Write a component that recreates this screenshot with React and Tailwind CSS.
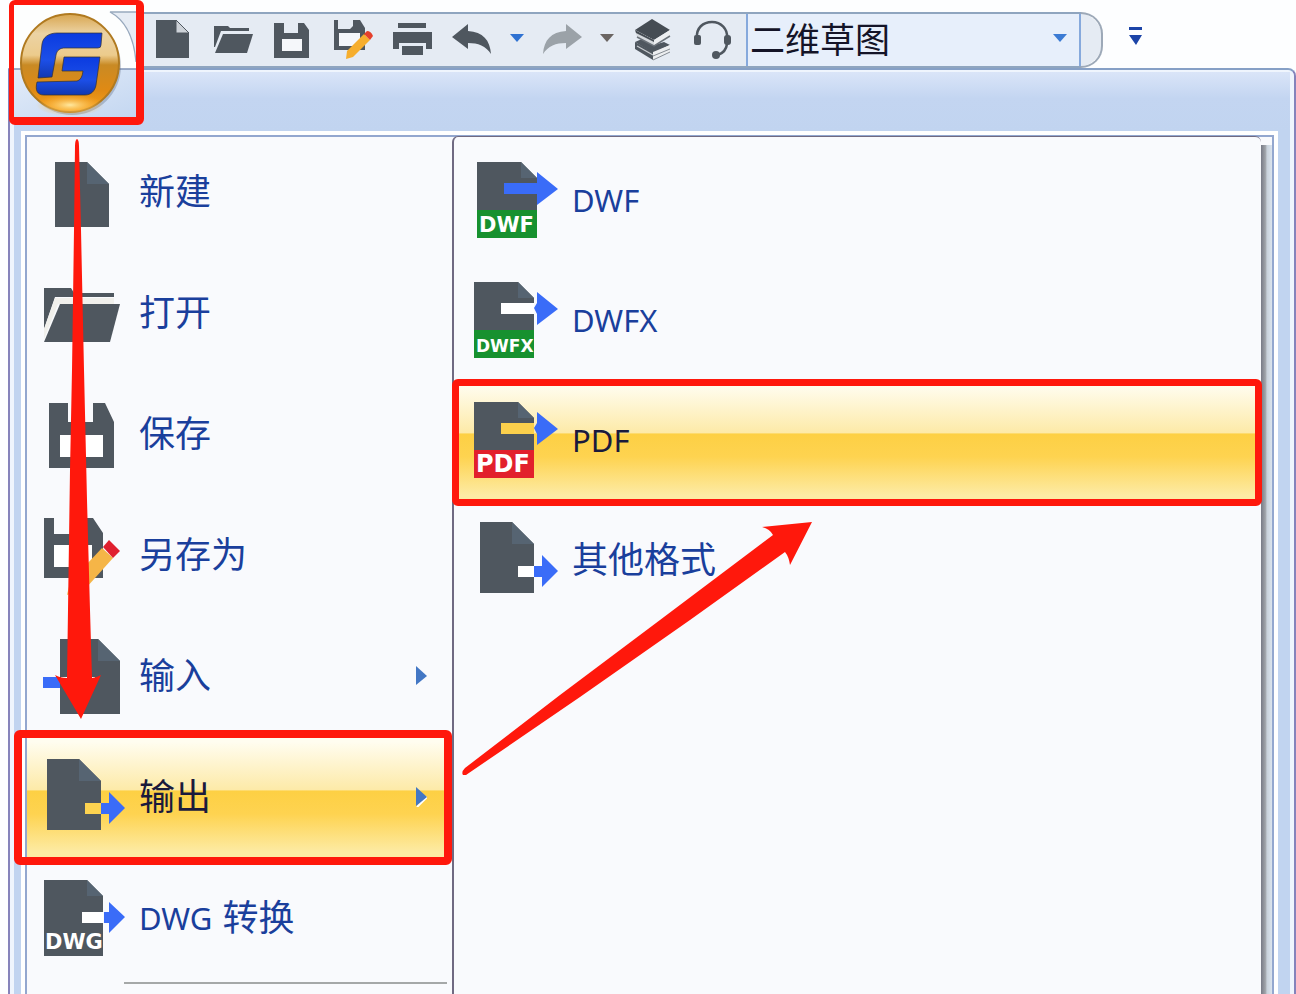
const INK = "#4f575f";
const BLUE = "#3a6cf8";

function PageShape({ x, y, w, h, fold }) {
    const right = x + w;
    return (
        <>
            <path d={`M${x} ${y}H${right - fold}L${right} ${y + fold}V${y + h}H${x}Z`} fill={INK} />
            <path d={`M${right - fold} ${y}L${right} ${y + fold}H${right - fold}Z`} fill="#566472" />
        </>
    );
}

function MenuGlyph({ children }) {
    return (
        <svg className="w-[84px] h-20 shrink-0" viewBox="0 0 84 80" aria-hidden="true">
            {children}
        </svg>
    );
}

function NewIcon() {
    return (
        <MenuGlyph>
            <PageShape x={12} y={10} w={54} h={65} fold={22} />
        </MenuGlyph>
    );
}

function OpenIcon() {
    return (
        <MenuGlyph>
            <path d="M1 15H28L31 20H71V24H12L1 56Z" fill={INK} />
            <path d="M12 25H71V31H15L1 66V56Z" fill="#f1f0ec" />
            <path d="M17 31H77L67 69H1Z" fill={INK} />
        </MenuGlyph>
    );
}

function SaveIcon() {
    return (
        <MenuGlyph>
            <path d="M6 9H25V28H50V9H62L71 28V74H6Z" fill={INK} />
            <path d="M17 41H60V63H17Z" fill="#fff" />
        </MenuGlyph>
    );
}

function SaveAsIcon() {
    return (
        <MenuGlyph>
            <path d="M1 3H11V19H36V3H50L60 18V63H1Z" fill={INK} />
            <path d="M11 30H49V52H11Z" fill="#fff" />
            <path d="M59 33L70 43L43 73L24 80L27 67Z" fill="#f5b547" />
            <path d="M66 25L77 36L70 43L60 32Z" fill="#e0202f" />
        </MenuGlyph>
    );
}

function ImportIcon() {
    return (
        <MenuGlyph>
            <PageShape x={17} y={3} w={60} h={75} fold={22} />
            <path d="M0 41H17V52H0Z" fill={BLUE} />
            <path d="M18 41H52V48H18Z" fill="#fff" />
        </MenuGlyph>
    );
}

function ExportIcon({ active, x = 0 }) {
    return (
        <MenuGlyph>
            <g transform={`translate(${x} 0)`}>
                <PageShape x={4} y={2} w={54} h={71} fold={22} />
                <path d="M42 46H58V57H42Z" fill={active ? "#fdd350" : "#fff"} />
                <path d="M58 46H66V35L82 51L66 67V57H58Z" fill={BLUE} />
            </g>
        </MenuGlyph>
    );
}

function DwgIcon() {
    return (
        <MenuGlyph>
            <PageShape x={1} y={2} w={59} h={76} fold={16} />
            <path d="M39 34H60V45H39Z" fill="#fff" />
            <path d="M61 34H66V24L82 39L66 55V45H61Z" fill={BLUE} />
            <text x="2" y="71" fontSize="21" fontWeight="700" fontFamily="DejaVu Sans" fill="#fff">
                DWG
            </text>
        </MenuGlyph>
    );
}

function FormatIcon({ tag, band, shaft, size = 21, x = 0 }) {
    return (
        <MenuGlyph>
            <PageShape x={x} y={2} w={60} h={76} fold={16} />
            <path d={`M${x} 50H${x + 60}V78H${x}Z`} fill={band} />
            <path d={`M${x + 27} 23H${x + 60}V34H${x + 27}Z`} fill={shaft} />
            <path d="M60 28L63 23V12L84 29L63 45V34Z" fill={BLUE} />
            <text x={x + 2} y="72" fontSize={size} fontWeight="700" fontFamily="DejaVu Sans" fill="#fff">
                {tag}
            </text>
        </MenuGlyph>
    );
}

function ToolButton({ label, children }) {
    return (
        <button type="button" aria-label={label} className="w-[60px] h-full flex items-center justify-center shrink-0">
            <svg className="w-11 h-11" viewBox="0 0 44 44" aria-hidden="true">
                {children}
            </svg>
        </button>
    );
}

function DropButton({ label, color }) {
    return (
        <button type="button" aria-label={label} className="w-[30px] h-full flex items-center justify-center shrink-0">
            <svg className="w-[14px] h-2 mb-1" viewBox="0 0 14 8" aria-hidden="true">
                <path d="M0 0H14L7 8Z" fill={color} />
            </svg>
        </button>
    );
}

function AppLogo() {
    return (
        <svg className="w-full h-full" viewBox="13 5 122 112" preserveAspectRatio="none" aria-hidden="true">
            <defs>
                <linearGradient id="ball" x1="0" y1="0" x2="0" y2="1">
                    <stop offset="0" stopColor="#d8a650" />
                    <stop offset="0.2" stopColor="#ecd3a4" />
                    <stop offset="0.42" stopColor="#eccb8c" />
                    <stop offset="0.52" stopColor="#c98a24" />
                    <stop offset="0.78" stopColor="#e08a14" />
                    <stop offset="1" stopColor="#f7a21c" />
                </linearGradient>
                <radialGradient id="glow" cx="0.5" cy="0.5" r="0.5">
                    <stop offset="0" stopColor="#ffe9a0" />
                    <stop offset="1" stopColor="#ffb030" stopOpacity="0" />
                </radialGradient>
                <linearGradient id="mark" x1="0" y1="0" x2="0" y2="1">
                    <stop offset="0" stopColor="#0b3be0" />
                    <stop offset="0.6" stopColor="#1c4fe8" />
                    <stop offset="1" stopColor="#1238b0" />
                </linearGradient>
                <linearGradient id="base" x1="0" y1="0" x2="1" y2="1">
                    <stop offset="0" stopColor="#e3ecf9" />
                    <stop offset="1" stopColor="#c4d7f1" />
                </linearGradient>
            </defs>
            <path d="M13 5H135V69H13Z" fill="#fdfefe" />
            <path d="M109 12H135V62C133 38 124 20 109 12Z" fill="#e6ecf4" />
            <path d="M135 12H109C124 20 133 38 135 62" fill="none" stroke="#98a9bd" strokeWidth="1.3" />
            <path d="M13 69H135V117H13Z" fill="url(#base)" />
            <path d="M13 69H135" stroke="#7f92b4" strokeWidth="1.5" />
            <circle cx="71" cy="66" r="49" fill="#5d6a80" opacity="0.35" />
            <circle cx="69" cy="63" r="49" fill="url(#ball)" stroke="#b07a20" strokeWidth="2" />
            <ellipse cx="69" cy="105" rx="34" ry="11" fill="url(#glow)" />
            <g fill="url(#mark)" stroke="#35302e" strokeWidth="0.7">
                <path d="M101 33H56C48 33 42 37 41 44L37 78L51 77L55 55C56 50 59 48 64 48H97Q100 48 100 45Z" />
                <path d="M63 57H99L95 85C94 91 90 95 84 95H43C36 95 34 90 36 82L76 81Q81 80 82 71H61Z" />
            </g>
        </svg>
    );
}

function QuickAccessBar() {
    return (
        <div className="flex-1 h-[56px] flex bg-[#e5ebf3] min-w-0 rounded-r-[28px]">
            <div className="flex-1 flex border-y-2 border-[#8fa5bf] min-w-0">
                <div className="flex -ml-0.5">
                    <ToolButton label="新建">
                        <path d="M6 2H26L39 15V40H6Z" fill={INK} />
                        <path d="M26 2L39 15H26Z" fill="#cdd2d8" stroke={INK} strokeWidth="1" />
                    </ToolButton>
                    <ToolButton label="打开">
                        <path d="M4 8H18L20 10H39V13H11L5 29H4Z" fill={INK} />
                        <path d="M13 16H43L37 35H5Z" fill={INK} />
                    </ToolButton>
                    <ToolButton label="保存">
                        <path d="M4 5H14V15H28V5H34L39 12V40H4Z" fill={INK} />
                        <path d="M12 21H32V33H12Z" fill="#f5f7fa" />
                    </ToolButton>
                    <ToolButton label="另存为">
                        <path d="M4 2H8V11H20L23 8V2H30L35 10V32H4Z" fill={INK} />
                        <path d="M9 15H30V28H9Z" fill="#f5f7fa" />
                        <path d="M34 16L40 22L23 39L16 41L17 33Z" fill="#f6ae2d" />
                        <path d="M37 13Q41 13 43 18L40 22L34 16Z" fill="#e5402c" />
                    </ToolButton>
                    <ToolButton label="打印">
                        <path d="M8 5H36V10H8ZM3 14H42V31H36V25H9V31H3Z" fill={INK} />
                        <path d="M12 28H33V37H12Z" fill={INK} />
                    </ToolButton>
                    <ToolButton label="撤销">
                        <path d="M2 19L18 6V13C33 14 40 22 41 36C36 28 28 25 18 25V31Z" fill={INK} />
                    </ToolButton>
                    <DropButton label="撤销列表" color="#2f72d2" />
                    <ToolButton label="重做">
                        <path d="M42 19L26 6V13C11 14 4 22 3 36C8 28 16 25 26 25V31Z" fill="#9ba2a8" />
                    </ToolButton>
                    <DropButton label="重做列表" color="#6b6562" />
                    <ToolButton label="图库">
                        <path d="M5 24L12 21L24 27L34 24L40 27L23 35Z" fill={INK} />
                        <path d="M5 24L23 34V42L5 31Z" fill={INK} />
                        <path d="M23 34L40 27V34L23 42Z" fill="#eceef0" />
                        <path d="M7 28L23 37" stroke="#c9cdd1" strokeWidth="1.2" />
                        <path d="M23 38L40 31M23 42L40 34" stroke="#858c93" strokeWidth="1" />
                        <path d="M22 1L40 12L24 22L5 12Z" fill="#454c53" />
                        <path d="M24 22L40 12V18L24 28Z" fill="#eceef0" />
                        <path d="M5 12L24 22V28L7 19Z" fill="#d5d9dd" />
                        <path d="M5 12L24 22V24L6 15Z" fill="#454c53" />
                        <path d="M7 19L24 28L40 18" fill="none" stroke="#6b7279" strokeWidth="1.5" />
                    </ToolButton>
                    <ToolButton label="在线客服">
                        <path d="M7 20C6 10 13 4 22 4C31 4 38 11 37 20" fill="none" stroke={INK} strokeWidth="2.5" />
                        <path d="M37 26Q36 34 28 37" fill="none" stroke={INK} strokeWidth="2.5" />
                        <rect x="4" y="17" width="7" height="10" rx="2" fill={INK} />
                        <rect x="34" y="17" width="7" height="10" rx="3" fill={INK} />
                        <circle cx="26" cy="37" r="4" fill={INK} />
                    </ToolButton>
                </div>
                <div className="relative flex-1 ml-1 border-x-2 border-[#86a9dc] bg-[#e7effb] min-w-0">
                    <select
                        aria-label="工作空间"
                        className="w-full h-[52px] appearance-none bg-transparent pl-[2px] pb-1 text-[35px] leading-[52px] text-[#141428] outline-none"
                    >
                        <option>二维草图</option>
                    </select>
                    <svg className="absolute right-3 top-5 w-[14px] h-2 pointer-events-none" viewBox="0 0 14 8" aria-hidden="true">
                        <path d="M0 0H14L7 8Z" fill="#3b7bd4" />
                    </svg>
                </div>
            </div>
            <span className="w-[22px] h-full border-t-2 border-r-2 border-b-2 border-[#9da9b8] rounded-r-full shrink-0" />
        </div>
    );
}

const mainItems = [
    { label: "新建", icon: <NewIcon /> },
    { label: "打开", icon: <OpenIcon /> },
    { label: "保存", icon: <SaveIcon /> },
    { label: "另存为", icon: <SaveAsIcon /> },
    { label: "输入", icon: <ImportIcon />, more: true },
    { label: "输出", icon: <ExportIcon active />, more: true, active: true },
    { latin: "DWG", label: "转换", icon: <DwgIcon /> },
];

const exportItems = [
    { latin: "DWF", icon: <FormatIcon tag="DWF" band="#17912f" shaft={BLUE} x={3} /> },
    { latin: "DWFX", icon: <FormatIcon tag="DWFX" band="#17912f" shaft="#fff" size={17} /> },
    { latin: "PDF", icon: <FormatIcon tag="PDF" band="#e2202c" shaft="#fcd04c" size={24} />, active: true },
    { label: "其他格式", icon: <ExportIcon x={2} /> },
];

function MenuItem({ item, pad, frame }) {
    return (
        <li className="relative">
            <button
                type="button"
                className={`w-full h-[120px] flex items-center text-left ${pad} ${item.active
                    ? "text-[#1a1a3c] bg-[linear-gradient(180deg,#fffdf0_4%,#fdeaa8_44%,#fdd044_45%,#fed350_64%,#fdeba4_96%)]"
                    : "text-[#1a3f9c]"
                    }`}
            >
                {item.icon}
                <span className="flex items-center gap-[10px] text-[36px] leading-[48px] whitespace-nowrap">
                    {item.latin ? <span className="text-[31px]">{item.latin}</span> : null}
                    {item.label ? <span>{item.label}</span> : null}
                </span>
                {item.more ? (
                    <svg className="w-[11px] h-5 ml-auto mr-[25px]" viewBox="0 0 11 20" aria-hidden="true">
                        {item.active ? <path d="M11 10L1 20" stroke="#fff" strokeWidth="2" /> : null}
                        <path d="M0 0L11 10L0 19Z" fill="#4377c4" />
                    </svg>
                ) : null}
            </button>
            {item.active ? (
                <span className={`absolute border-[#ff180c] rounded-md pointer-events-none z-10 ${frame}`} />
            ) : null}
        </li>
    );
}

// Hand-drawn pointers laid over the menu
function Pointers() {
    return (
        <svg className="absolute left-0 top-0 w-[1296px] h-[994px] pointer-events-none z-20" viewBox="0 0 1296 994" aria-hidden="true">
            <g fill="#ff180c">
                <path d="M77 139Q79 140 79 146L81 230L84 370L87 500L90 610L92 678Q96 678 101 675L81 719L55 675Q60 678 67 678L68 610L70 470L72 370L74 230L75 146Q75 140 77 139Z" />
                <path d="M463 775Q461 772 465 768L560 695L660 620L773 535Q770 529 762 527L812 522L790 565Q789 557 785 552L690 620L580 697L466 775Z" />
            </g>
        </svg>
    );
}

export default function App() {
    return (
        <div className="relative min-h-screen flex flex-col overflow-hidden bg-[#fdfeff] font-['Noto_Sans','Noto_Sans_CJK_SC',sans-serif]">
            <header className="relative z-10 h-[68px] flex items-start shrink-0">
                <button
                    type="button"
                    aria-label="应用程序菜单"
                    className="ml-[9px] w-[135px] h-[125px] shrink-0 border-t-[5px] border-l-[5px] border-r-8 border-b-8 border-[#ff180c] rounded-md"
                >
                    <AppLogo />
                </button>
                <div className="flex-1 flex items-center pt-3 min-w-0">
                    <QuickAccessBar />
                    <button type="button" aria-label="自定义快速访问工具栏" className="ml-[26px] mr-[154px] mb-2">
                        <svg className="w-[13px] h-[18px]" viewBox="0 0 13 18" aria-hidden="true">
                            <path d="M0 0H13V3H0ZM0 8H13L7 18Z" fill="#1c44a8" />
                        </svg>
                    </button>
                </div>
            </header>

            <main className="flex-1 flex ml-2 border-t-2 border-x-2 border-t-[#86a0c6] border-x-[#8583bb] rounded-tr-lg bg-[#c1d4f0]">
                <div className="flex-1 flex flex-col border-x-4 border-t-2 border-[#eff5fd] rounded-tr-md min-w-0">
                    <div className="h-[59px] shrink-0 bg-[linear-gradient(180deg,#dae5f8_0%,#c3d5f1_45%,#c1d4f0_100%)]" />
                    <div className="flex-1 flex ml-[7px] mr-3 border-t-4 border-x-4 border-white">
                        <div className="flex-1 flex items-stretch border-t-2 border-x-2 border-[#93a7cf] bg-[#f9fafd] min-w-0">
                            <nav aria-label="文件" className="w-[425px] h-[857px] shrink-0">
                                <ul className="-mt-[5px] flex flex-col gap-px">
                                    {mainItems.map((item, i) => (
                                        <MenuItem
                                            key={i}
                                            item={item}
                                            pad="pl-4 gap-3"
                                            frame="border-8 -left-[13px] right-0 -top-[7px] -bottom-[8px]"
                                        />
                                    ))}
                                </ul>
                                <hr className="ml-[97px] mr-[5px] mt-1 border-t-2 border-[#a5a8a8]" />
                            </nav>
                            <nav aria-label="输出" className="flex-1 -mt-px border-l-2 border-t border-[#706a82] rounded-t-md bg-[#f9fafd] min-w-0">
                                <ul className="pt-[3px]">
                                    {exportItems.map((item, i) => (
                                        <MenuItem
                                            key={i}
                                            item={item}
                                            pad="pl-5 gap-[14px]"
                                            frame="border-[7px] -left-[2px] -right-px -top-px -bottom-[6px]"
                                        />
                                    ))}
                                </ul>
                            </nav>
                            <div className="w-[11px] mt-2 shrink-0 bg-[linear-gradient(90deg,#777a86_0%,#a0a4aa_40%,#c9d2dc_55%,#dbe4ee_100%)]" />
                        </div>
                    </div>
                </div>
            </main>
            <Pointers />
        </div>
    );
}
